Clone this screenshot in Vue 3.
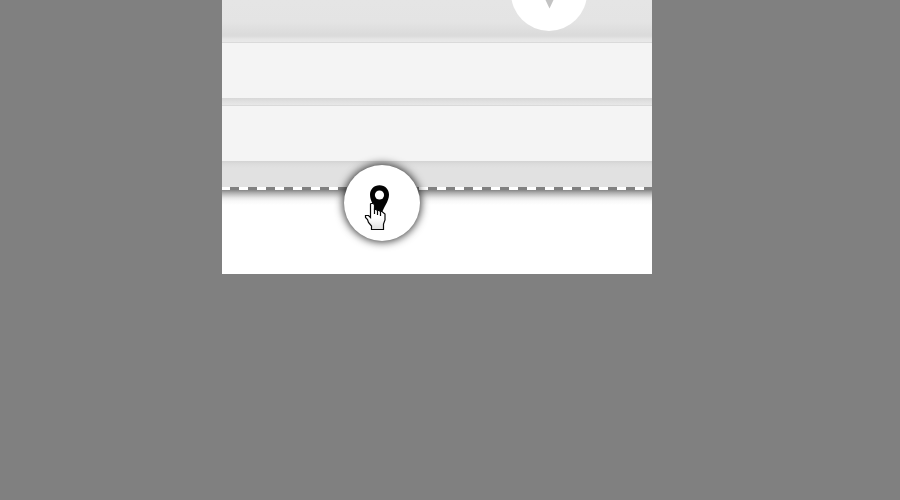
<script setup>
</script>

<template>
  <main class="page">
    <section class="sheet">
      <div class="panel">
        <div class="header"></div>
        <div class="row"></div>
        <div class="gap"></div>
        <div class="row"></div>
        <div class="footer"></div>
      </div>
      <div class="dashes"></div>
      <div class="below"></div>
      <div class="marker upper">
        <svg width="76" height="76" viewBox="0 0 76 76"><path d="M30.5 36.5H46.5L38.5 53.5Z" fill="#c3c3c3" /></svg>
      </div>
      <button class="marker lower" aria-label="Location">
        <svg width="76" height="76" viewBox="0 0 76 76">
          <path d="M35.5 20.3C29.8 20.3 26 24.5 26 29.8C26 36 30 39 32 49H37.6C39.5 42 45 36.5 45 29.8C45 24.5 41.2 20.3 35.5 20.3Z" fill="#030303" />
          <circle cx="35.5" cy="30" r="4.6" fill="#fff" />
        </svg>
      </button>
      <svg class="cursor" width="22" height="29" viewBox="0 0 22 29">
        <defs>
          <linearGradient id="hand" x1="0" y1="0" x2="0" y2="1">
            <stop offset=".55" stop-color="#fff" />
            <stop offset="1" stop-color="#dedede" />
          </linearGradient>
        </defs>
        <path d="M7 1.5H9L10.5 2.5V7.5H12L13.5 8.5H15L16.5 9.5H18L21 12V18L19.5 22V27.5H7.5V24L4.5 20.5L3.5 17.5L1.5 15.5V13.5H4.5L6.5 15.5V2Z" fill="url(#hand)" stroke="#080808" stroke-width="1.2" />
        <path d="M10.5 6.5V12M13.5 8.5V13M16.5 9.5V14" fill="none" stroke="#080808" stroke-width="1.2" />
      </svg>
    </section>
  </main>
</template>

<style>
body { margin: 0; background: #808080; }
</style>

<style scoped>
.page { width: 900px; height: 500px; overflow: hidden; background: #808080; }
.sheet { position: relative; width: 430px; height: 274px; margin-left: 222px; overflow: hidden; background: #fff; }
.header { box-sizing: border-box; height: 43px; border-bottom: 1px solid #dadada; background: linear-gradient(#e5e5e5 0, #e4e4e4 22px, #dbdbdb 34px, #dbdbdb 36px, #e5e5e5 39px, #e9e9e9 42px); }
.row { height: 55px; background: #f4f4f4; }
.gap { box-sizing: border-box; height: 8px; border-bottom: 1px solid #dadada; background: linear-gradient(#d7d7d7, #e2e2e2 4px, #e7e7e7); }
.footer { height: 26px; background: linear-gradient(#d3d3d3, #dcdcdc 3px, #e1e1e1 7px, #e1e1e1); }
.dashes { height: 3px; background: repeating-linear-gradient(90deg, #fff 0 8px, #808080 8px 17px, #fff 17px 18px); }
.below { height: 84px; background: linear-gradient(#858585 0, #a4a4a4 2px, #c9c9c9 5px, #e8e8e8 8px, #f8f8f8 11px, #fff 15px); }
.marker { position: absolute; width: 76px; height: 76px; padding: 0; border: 0; border-radius: 50%; background: #fff; }
.marker svg { display: block; }
.upper { left: 289px; top: -45px; }
.lower { left: 122px; top: 165px; box-shadow: 0 0 9px 1px rgba(0, 0, 0, .8); }
.cursor { position: absolute; left: 142px; top: 202px; }
</style>
